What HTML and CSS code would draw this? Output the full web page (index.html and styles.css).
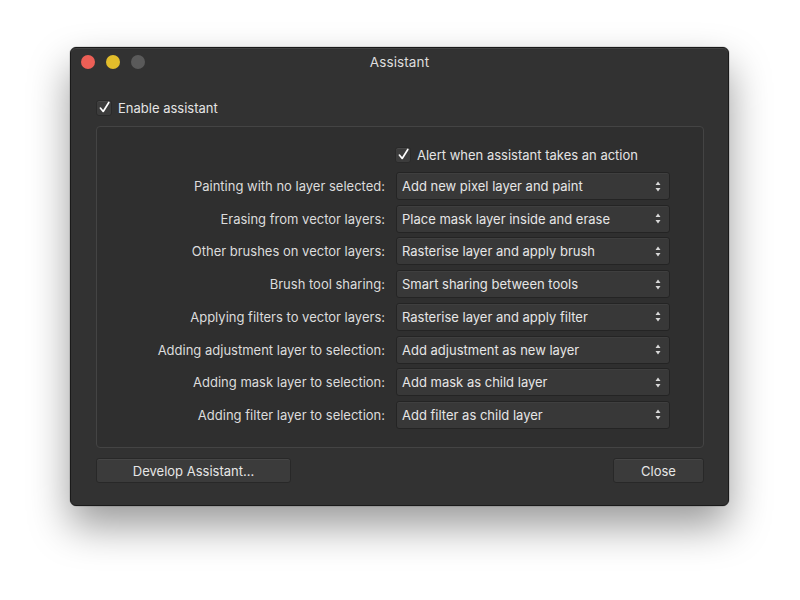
FILE: index.html
```html
<!DOCTYPE html>
<html>
<head>
<meta charset="utf-8">
<link rel="stylesheet" href="styles.css">
</head>
<body>
<div class="window">
  <div class="titlebar">
    <div class="lights">
      <span class="light red"></span>
      <span class="light yellow"></span>
      <span class="light grey"></span>
    </div>
    <div class="title">Assistant</div>
    <div></div>
  </div>
  <div class="content">
    <label class="check-row enable">
      <span class="checkbox"><svg viewBox="0 0 16 16" width="15" height="15"><path d="M3.6 8.6 L6.6 12.2 L12.6 2.6" fill="none" stroke="#fff" stroke-width="1.8" stroke-linecap="round" stroke-linejoin="round"/></svg></span>
      <span>Enable assistant</span>
    </label>
    <div class="panel">
      <label class="check-row alert">
        <span class="checkbox"><svg viewBox="0 0 16 16" width="15" height="15"><path d="M3.6 8.6 L6.6 12.2 L12.6 2.6" fill="none" stroke="#fff" stroke-width="1.8" stroke-linecap="round" stroke-linejoin="round"/></svg></span>
        <span>Alert when assistant takes an action</span>
      </label>
      <div class="grid">
        <div class="lbl">Painting with no layer selected:</div>
        <div class="select"><span>Add new pixel layer and paint</span><svg class="arrows" viewBox="0 0 6 11" width="6" height="11"><path d="M3 0.5 L5.5 4 L0.5 4 Z M3 10.5 L5.5 7 L0.5 7 Z" fill="#d8d8d8"/></svg></div>
        <div class="lbl">Erasing from vector layers:</div>
        <div class="select"><span>Place mask layer inside and erase</span><svg class="arrows" viewBox="0 0 6 11" width="6" height="11"><path d="M3 0.5 L5.5 4 L0.5 4 Z M3 10.5 L5.5 7 L0.5 7 Z" fill="#d8d8d8"/></svg></div>
        <div class="lbl">Other brushes on vector layers:</div>
        <div class="select"><span>Rasterise layer and apply brush</span><svg class="arrows" viewBox="0 0 6 11" width="6" height="11"><path d="M3 0.5 L5.5 4 L0.5 4 Z M3 10.5 L5.5 7 L0.5 7 Z" fill="#d8d8d8"/></svg></div>
        <div class="lbl">Brush tool sharing:</div>
        <div class="select"><span>Smart sharing between tools</span><svg class="arrows" viewBox="0 0 6 11" width="6" height="11"><path d="M3 0.5 L5.5 4 L0.5 4 Z M3 10.5 L5.5 7 L0.5 7 Z" fill="#d8d8d8"/></svg></div>
        <div class="lbl">Applying filters to vector layers:</div>
        <div class="select"><span>Rasterise layer and apply filter</span><svg class="arrows" viewBox="0 0 6 11" width="6" height="11"><path d="M3 0.5 L5.5 4 L0.5 4 Z M3 10.5 L5.5 7 L0.5 7 Z" fill="#d8d8d8"/></svg></div>
        <div class="lbl">Adding adjustment layer to selection:</div>
        <div class="select"><span>Add adjustment as new layer</span><svg class="arrows" viewBox="0 0 6 11" width="6" height="11"><path d="M3 0.5 L5.5 4 L0.5 4 Z M3 10.5 L5.5 7 L0.5 7 Z" fill="#d8d8d8"/></svg></div>
        <div class="lbl">Adding mask layer to selection:</div>
        <div class="select"><span>Add mask as child layer</span><svg class="arrows" viewBox="0 0 6 11" width="6" height="11"><path d="M3 0.5 L5.5 4 L0.5 4 Z M3 10.5 L5.5 7 L0.5 7 Z" fill="#d8d8d8"/></svg></div>
        <div class="lbl">Adding filter layer to selection:</div>
        <div class="select"><span>Add filter as child layer</span><svg class="arrows" viewBox="0 0 6 11" width="6" height="11"><path d="M3 0.5 L5.5 4 L0.5 4 Z M3 10.5 L5.5 7 L0.5 7 Z" fill="#d8d8d8"/></svg></div>
      </div>
    </div>
    <div class="buttons">
      <button class="btn develop">Develop Assistant...</button>
      <button class="btn close">Close</button>
    </div>
  </div>
</div>
</body>
</html>
```
FILE: styles.css
```css
* { box-sizing: border-box; }
html, body { margin: 0; padding: 0; background: #ffffff; }
body {
  width: 800px;
  height: 600px;
  overflow: hidden;
  padding: 47px 0 0 70px;
  font-family: "Inter", "Noto Sans", "DejaVu Sans", sans-serif;
  font-size: 13px;
  color: #e2e2e2;
}
.window {
  width: 659px;
  height: 459px;
  background: #323232;
  border: 1px solid #1a1a1a;
  border-radius: 6px;
  box-shadow: 0 0 0 0.5px rgba(0,0,0,0.2), 0 20px 40px rgba(0,0,0,0.4), inset 0 1px 0 rgba(255,255,255,0.08);
  display: flex;
  flex-direction: column;
}
.titlebar {
  height: 27px;
  display: grid;
  grid-template-columns: 1fr auto 1fr;
  align-items: center;
  padding: 0 10px;
}
.lights { display: flex; gap: 11px; }
.light { width: 14px; height: 14px; border-radius: 50%; display: block; }
.red { background: #ec5f56; }
.yellow { background: #e2bd2b; }
.grey { background: #5a5a5a; }
.title { font-size: 13.5px; color: #dedede; letter-spacing: 0.1px; }
.content { padding: 25px 24px 0 25px; display: flex; flex-direction: column; }
.check-row { display: flex; align-items: center; gap: 6px; height: 15px; color: #e4e4e4; }
.checkbox {
  width: 16px; height: 16px;
  background: #3c3c3c;
  border: 1px solid #2a2a2a;
  border-radius: 3px;
  display: flex; align-items: center; justify-content: center;
  box-shadow: inset 0 1px 0 rgba(255,255,255,0.06);
  flex: none;
}
.checkbox svg { display: block; margin-top: -1px; overflow: visible; }
.panel {
  margin-top: 11px;
  height: 322px;
  border: 1px solid #444444;
  border-radius: 4px;
  background: #2f2f2f;
  padding: 20px 0 0 0;
}
.alert { margin-left: 298px; height: 16px; }
.grid {
  margin-top: 9px;
  display: grid;
  grid-template-columns: 288px 274px;
  column-gap: 11px;
  row-gap: 4.71px;
  grid-auto-rows: 28px;
}
.lbl { text-align: right; align-self: center; color: #dcdcdc; white-space: nowrap; }
.select {
  background: #383838;
  border: 1px solid #242424;
  border-radius: 3px;
  box-shadow: inset 0 1px 0 rgba(255,255,255,0.04);
  display: flex; align-items: center; justify-content: space-between;
  padding: 0 8px 0 5px;
  color: #e6e6e6;
  white-space: nowrap;
}
.arrows { display: block; }
.buttons { margin-top: 10px; display: flex; justify-content: space-between; }
.btn {
  height: 25px;
  background: #3b3b3b;
  border: 1px solid #282828;
  border-radius: 3px;
  box-shadow: inset 0 1px 0 rgba(255,255,255,0.06);
  color: #e6e6e6;
  font-family: inherit;
  font-size: 13px;
  padding: 0;
}
.develop { width: 195px; }
.close { width: 91px; }
```
